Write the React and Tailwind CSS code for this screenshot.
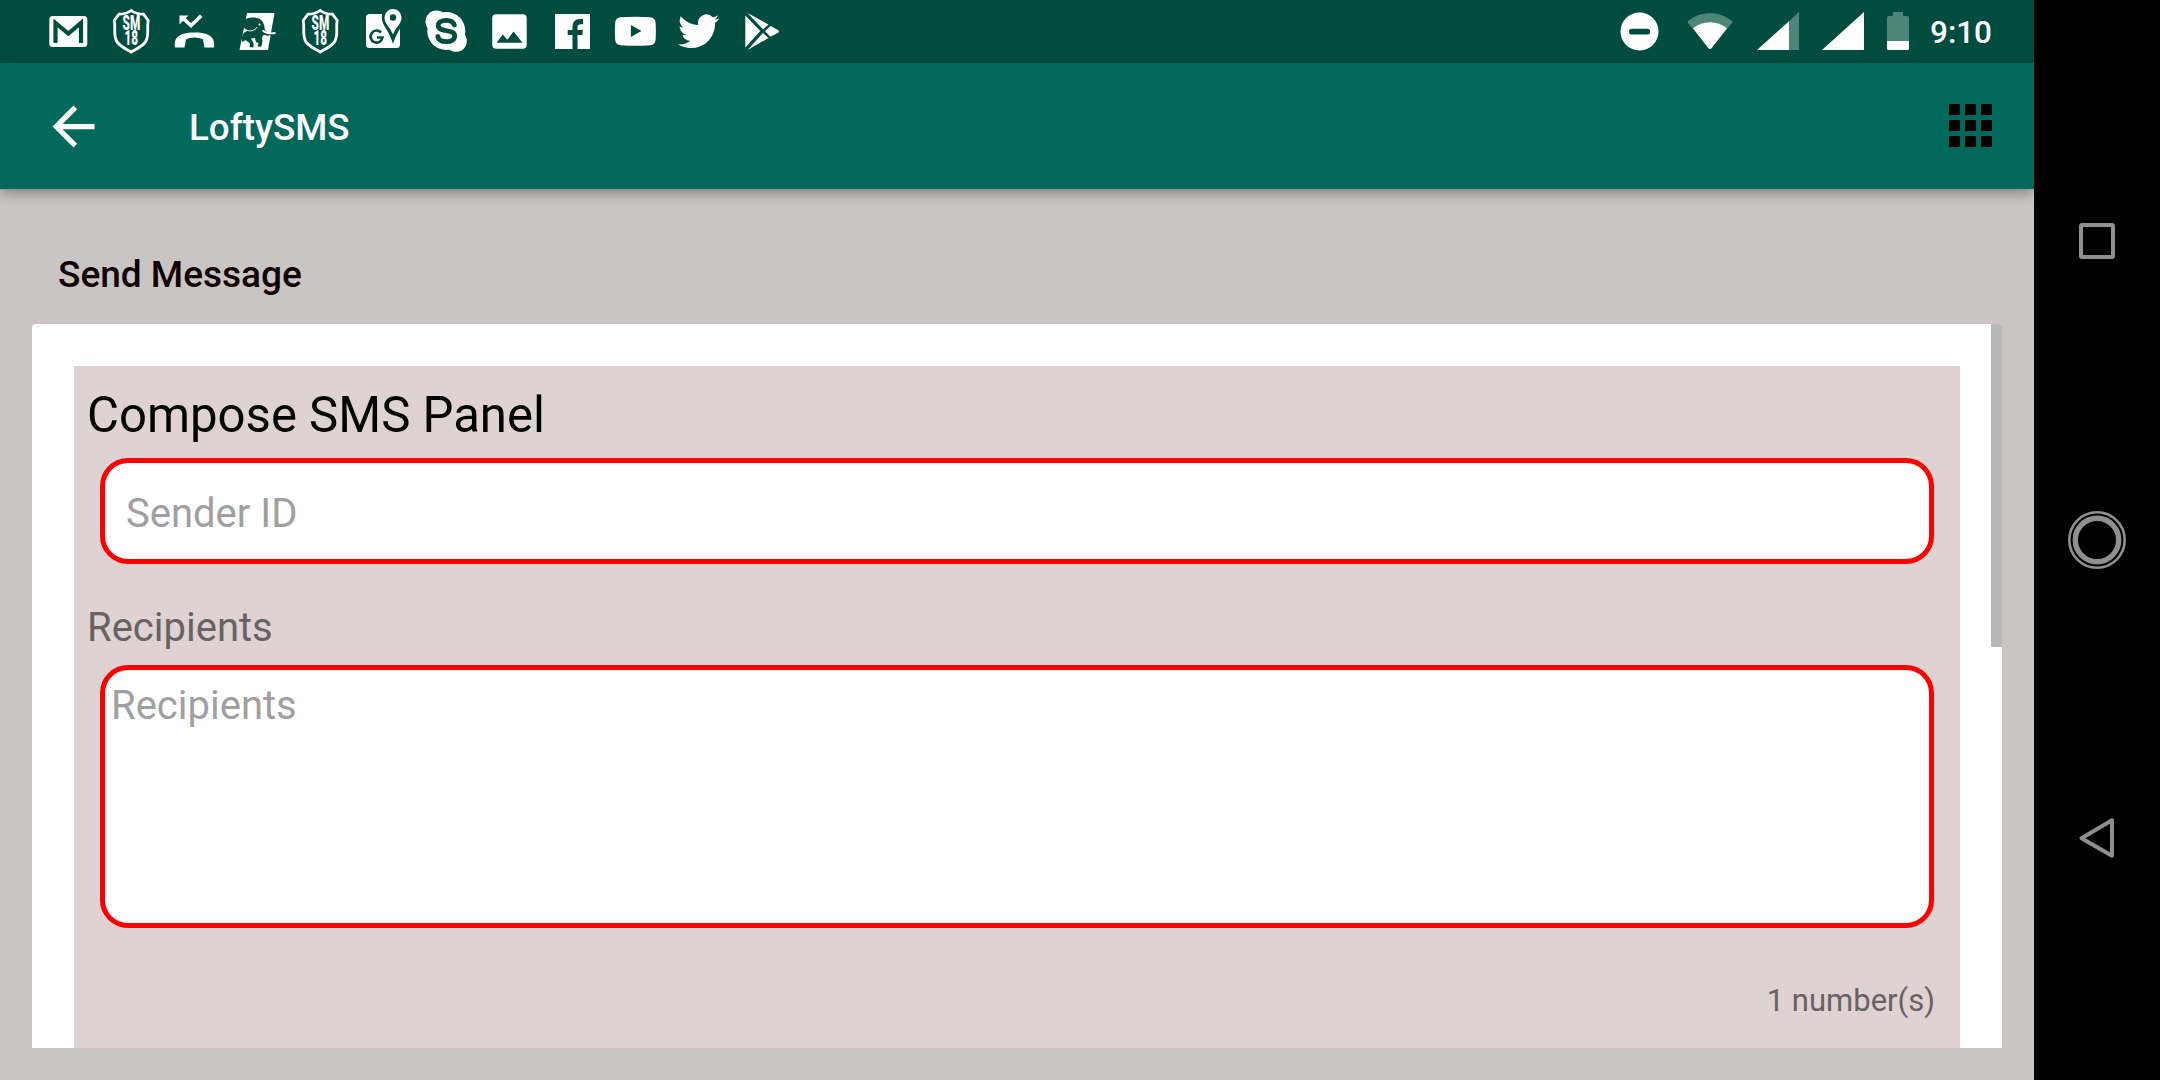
import { useState } from "react";

// Every notification icon sits in the same 63px slot of the status bar
const Slot = ({ children }) => (
  <svg className="w-[63px] h-[63px] shrink-0 fill-white" viewBox="0 0 63 63">
    {children}
  </svg>
);

const GmailIcon = () => (
  <Slot>
    <rect x="13.300" y="16" width="38" height="31" rx="3.500" />
    <path d="M19.500 43V23L32.300 33.500L45 23V43" fill="none" stroke="#004d40" strokeWidth="4.200" />
  </Slot>
);

const ShieldIcon = () => (
  <Slot>
    <path
      d="M32.200 10.500C29 13 24.500 14.200 20 14.200L15.200 20.500C17 28 14 34 17.500 41C20 46 26.500 48.500 32.200 52C38 48.500 44.500 46 47 41C50.500 34 47.500 28 49.200 20.500L44.500 14.200C40 14.200 35.500 13 32.200 10.500Z"
      fill="none"
      stroke="white"
      strokeWidth="2.800"
    />
    <text textAnchor="start" fontSize="19.500" fontWeight="900" fontFamily="Roboto, sans-serif" transform="translate(23.600 0) scale(0.600 1)">
      <tspan x="0" y="30">SM</tspan>
      <tspan x="3" y="45.500">18</tspan>
    </text>
  </Slot>
);

const MissedCallIcon = () => (
  <Slot>
    <path d="M17.500 15.500H26.500L23.700 18.300L29 23L38 14.500L40.500 17L29 28L21 20.800L17.500 24.500Z" />
    <path d="M13 47.500C11.800 40 14 32.500 32.500 32.500C51 32.500 53 40 52 47.500H42.500L41 39.500C37 36.800 28 36.800 24 39.500L22.500 47.500Z" />
  </Slot>
);

const ElephantIcon = () => (
  <Slot>
    <path d="M22 13H49.500L43 50H14.500Z" />
    <path
      d="M19 20C22.500 16.500 32 16.500 36 20C39 22 39.500 27 40 30C42 33 45 33.500 48 33.500C45 36.500 41 36 39 34.500C36.500 37 37 39 37.500 41L36.500 46.500H32.500L33.500 43L31 42L30 38L26 38.500L28.500 43V47.500L24.500 47L25 43.500L20.500 40L17.500 42C16 40 17 36 18.500 33.500C20 31.500 22 31 24 30C18.500 30 17 24 19 20Z"
      fill="#004d40"
    />
    <path d="M19.500 29.500C25 32 30 31 32 27" fill="none" stroke="white" strokeWidth="1" />
    <circle cx="34.500" cy="24.500" r="1.100" />
    <path d="M37.500 30.500C41 33.500 45 34 50.500 33" fill="none" stroke="white" strokeWidth="1.800" />
  </Slot>
);

const MapsIcon = () => (
  <Slot>
    <rect x="15" y="14" width="34" height="34" rx="3.500" />
    <path
      d="M42 9a8.500 8.500 0 0 0-8.500 8.500C33.500 24 39 28 42 36C45 28 50.500 24 50.500 17.500A8.500 8.500 0 0 0 42 9Z"
      stroke="#004d40"
      strokeWidth="5.500"
    />
    <path d="M42 9a8.500 8.500 0 0 0-8.500 8.500C33.500 24 39 27 42 34.500C45 27 50.500 24 50.500 17.500A8.500 8.500 0 0 0 42 9Z" />
    <circle cx="42" cy="17.500" r="3.200" fill="#004d40" />
    <path d="M30 32.500A6 6 0 1 0 31.500 37.500H26" fill="none" stroke="#004d40" strokeWidth="2.600" />
  </Slot>
);

const SkypeIcon = () => (
  <Slot>
    <circle cx="32.300" cy="31" r="19" />
    <circle cx="22.500" cy="21.500" r="11" />
    <circle cx="42" cy="41" r="10.800" />
    <path
      d="M40.300 25C39.500 22 36.500 20.300 32.300 20.300C27.300 20.300 24.200 22.500 24.200 25.500C24.200 33 40.700 28.500 40.700 36C40.700 39.500 37.300 41.700 32.300 41.700C27.300 41.700 24.300 39.500 23.800 36.500"
      fill="none"
      stroke="#004d40"
      strokeWidth="4.800"
      strokeLinecap="round"
    />
  </Slot>
);

const PhotoIcon = () => (
  <Slot>
    <rect x="15.200" y="14.200" width="34.500" height="34.500" rx="4" />
    <path d="M19.500 42.700L25.800 34.500L30.300 39.800L36.500 31.500L45.500 42.700Z" fill="#004d40" />
  </Slot>
);

const FacebookIcon = () => (
  <Slot>
    <rect x="15" y="14" width="35" height="35" />
    <path d="M32.500 49V35H27.700V30H32.500V27C32.500 22 35 19 40 19H43V24.300H41C38.500 24.300 37.500 25.300 37.500 27.500V30H43L42.300 35H37.500V49Z" fill="#004d40" />
  </Slot>
);

const YoutubeIcon = () => (
  <Slot>
    <path d="M17.800 17.300Q32.300 16.400 47.200 17.300Q52 17.700 52.600 22.500Q53.200 31 52.600 40Q52 44.700 47.200 45.200Q32.300 46.200 17.800 45.200Q12.700 44.700 12.200 40Q11.400 31 12.200 22.500Q12.700 17.700 17.800 17.300Z" />
    <path d="M27.900 25V37L38.500 31Z" fill="#004d40" />
  </Slot>
);

const TwitterIcon = () => (
  <Slot>
    <path
      transform="translate(12 10.700) scale(1.720)"
      d="M23.953 4.570a10 10 0 0 1-2.825.775 4.958 4.958 0 0 0 2.163-2.723c-.951.555-2.005.959-3.127 1.184a4.920 4.920 0 0 0-8.384 4.482C7.690 8.095 4.067 6.130 1.640 3.162a4.822 4.822 0 0 0-.666 2.475c0 1.710.870 3.213 2.188 4.096a4.904 4.904 0 0 1-2.228-.616v.060a4.923 4.923 0 0 0 3.946 4.827 4.996 4.996 0 0 1-2.212.085 4.936 4.936 0 0 0 4.604 3.417 9.867 9.867 0 0 1-6.102 2.105c-.390 0-.779-.023-1.170-.067a13.995 13.995 0 0 0 7.557 2.209c9.053 0 13.998-7.496 13.998-13.985 0-.210 0-.420-.015-.630A9.935 9.935 0 0 0 24 4.590z"
    />
  </Slot>
);

const PlayStoreIcon = () => (
  <Slot>
    <path d="M16.300 15.500L31.300 31L16.300 47.500Z" />
    <path d="M18.500 13L39.500 24.500L34 29.300Z" />
    <path d="M18.500 50L39.500 38L34 33Z" />
    <path d="M41.500 26L49 30Q51 31.300 49 32.700L41.500 36.800L36 31.300Z" />
  </Slot>
);

const notifications = [
  GmailIcon,
  ShieldIcon,
  MissedCallIcon,
  ElephantIcon,
  ShieldIcon,
  MapsIcon,
  SkypeIcon,
  PhotoIcon,
  FacebookIcon,
  YoutubeIcon,
  TwitterIcon,
  PlayStoreIcon,
];

const SystemIcons = () => (
  <svg className="w-[290px] h-[63px] fill-white" viewBox="1620 0 290 63">
    {/* do not disturb */}
    <circle cx="1639.500" cy="31.500" r="19" />
    <rect x="1629" y="28.700" width="21" height="5.800" rx="2.500" fill="#004d40" />
    {/* wifi */}
    <path d="M1710 49.500L1688 23Q1687 21.500 1688.500 20.500C1701 10.700 1719 10.700 1731.500 20.500Q1733 21.500 1732 23Z" opacity="0.310" />
    <path d="M1711.500 48.300Q1710 49.800 1708.500 48.300L1693 28.300C1702.500 20.200 1717.500 20.200 1727 28.300Z" />
    {/* sim 1, sim 2 */}
    <path d="M1789 50V21.200L1799 12V50Z" opacity="0.310" />
    <path d="M1757 50L1789 21.200V50Z" />
    <path d="M1822 50L1864 12V50Z" />
    {/* battery */}
    <path d="M1887 41V17.500Q1887 16 1888.500 16H1893V12H1903V16H1907.500Q1909 16 1909 17.500V41Z" opacity="0.310" />
    <path d="M1887 41H1909V48.500Q1909 50 1907.500 50H1888.500Q1887 50 1887 48.500Z" />
  </svg>
);

const StatusBar = () => (
  <div className="h-[63px] bg-[#004d40] flex items-center justify-between pl-[36px] pr-[43px]">
    <div className="flex">
      {notifications.map((Icon, i) => (
        <Icon key={i} />
      ))}
    </div>
    <div className="flex items-center">
      <SystemIcons />
      <span className="w-[61px] ml-5 pt-0.5 text-white text-[31.5px] leading-[63px] font-medium whitespace-nowrap">9:10</span>
    </div>
  </div>
);

const AppBar = () => (
  <header className="relative h-[126px] bg-[#00695c] flex items-center justify-between px-[42px] shadow-[0_4px_12px_rgba(0,0,0,0.35)]">
    <div className="flex items-center">
      <button aria-label="Back">
        <svg className="w-[63px] h-[63px] fill-white" viewBox="0 0 24 24">
          <path d="M20 11H7.830l5.590-5.590L12 4l-8 8 8 8 1.410-1.410L7.830 13H20v-2z" />
        </svg>
      </button>
      <h1 className="ml-[84px] pt-1 text-white text-[36.75px] leading-[44px] font-medium">LoftySMS</h1>
    </div>
    <button aria-label="Menu" className="grid grid-cols-3 gap-[5px] mb-px">
      {[...Array(9)].map((_, i) => (
        <span key={i} className="size-[11px] bg-black" />
      ))}
    </button>
  </header>
);

const ComposePanel = () => {
  const [sender, setSender] = useState("");
  const [recipients, setRecipients] = useState("");

  return (
    <div className="h-full bg-[#ded2d2] pt-[20px] pl-[13px] pr-[25px]">
      <h3 className="text-[49.1px] leading-[58px] text-black">Compose SMS Panel</h3>
      <input
        type="text"
        placeholder="Sender ID"
        value={sender}
        onChange={(e) => setSender(e.target.value)}
        className="block ml-[13px] mt-[14px] w-[1834px] h-[106px] px-[21px] pt-1 bg-white border-[5px] border-[#ff0000] rounded-[28px] text-[40px] placeholder:text-[#a0a0a0] outline-none"
      />
      <label className="block mt-[41px] text-[40px] leading-[46px] text-[#686262]">Recipients</label>
      <textarea
        placeholder="Recipients"
        value={recipients}
        onChange={(e) => setRecipients(e.target.value)}
        className="block ml-[13px] mt-[14px] w-[1834px] h-[263px] pl-[6px] pt-[13px] bg-white border-[5px] border-[#ff0000] rounded-[28px] text-[40px] leading-[46px] placeholder:text-[#a0a0a0] outline-none resize-none"
      />
      <p className="mt-[54px] text-right text-[31px] leading-[37px] text-[#686262]">1 number(s)</p>
    </div>
  );
};

const NavBar = () => (
  <nav className="w-[126px] bg-black flex flex-col items-center justify-center">
    <div className="h-[299px] flex items-center">
      <div className="size-[36px] border-4 border-[#8f8f8f] rounded-[3px]" />
    </div>
    <div className="h-[299px] flex items-center">
      <svg className="size-[60px]" viewBox="0 0 60 60" fill="none" stroke="#8f8f8f">
        <circle cx="30" cy="30" r="27.700" strokeWidth="2.600" />
        <circle cx="30" cy="30" r="21.700" strokeWidth="5.400" />
      </svg>
    </div>
    <div className="h-[299px] flex items-center">
      <svg className="size-[44px]" viewBox="0 0 44 44" fill="none" stroke="#8f8f8f" strokeWidth="4" strokeLinejoin="round">
        <path d="M37 3.300V38.700L6.500 21.200Z" />
      </svg>
    </div>
  </nav>
);

const App = () => {
  return (
    <div className="flex w-[2160px] h-[1080px] overflow-hidden bg-black font-['Roboto',sans-serif]">
      <div className="w-[2034px] flex flex-col bg-[#c9c5c4]">
        <StatusBar />
        <AppBar />
        <main className="flex-1 min-h-0 flex flex-col px-8 pb-8">
          <h2 className="mt-[64px] pl-[26px] text-[37px] leading-[43px] font-medium text-[#100000]">Send Message</h2>
          <div className="relative mt-[28px] flex-1 min-h-0 bg-white rounded-t-[4px] px-[42px] pt-[42px] overflow-hidden">
            <ComposePanel />
            {/* scroll thumb */}
            <div className="absolute top-0 right-0 w-[11px] h-[323px] bg-[#b8b8b8]" />
          </div>
        </main>
      </div>
      <NavBar />
    </div>
  );
};

export default App;
